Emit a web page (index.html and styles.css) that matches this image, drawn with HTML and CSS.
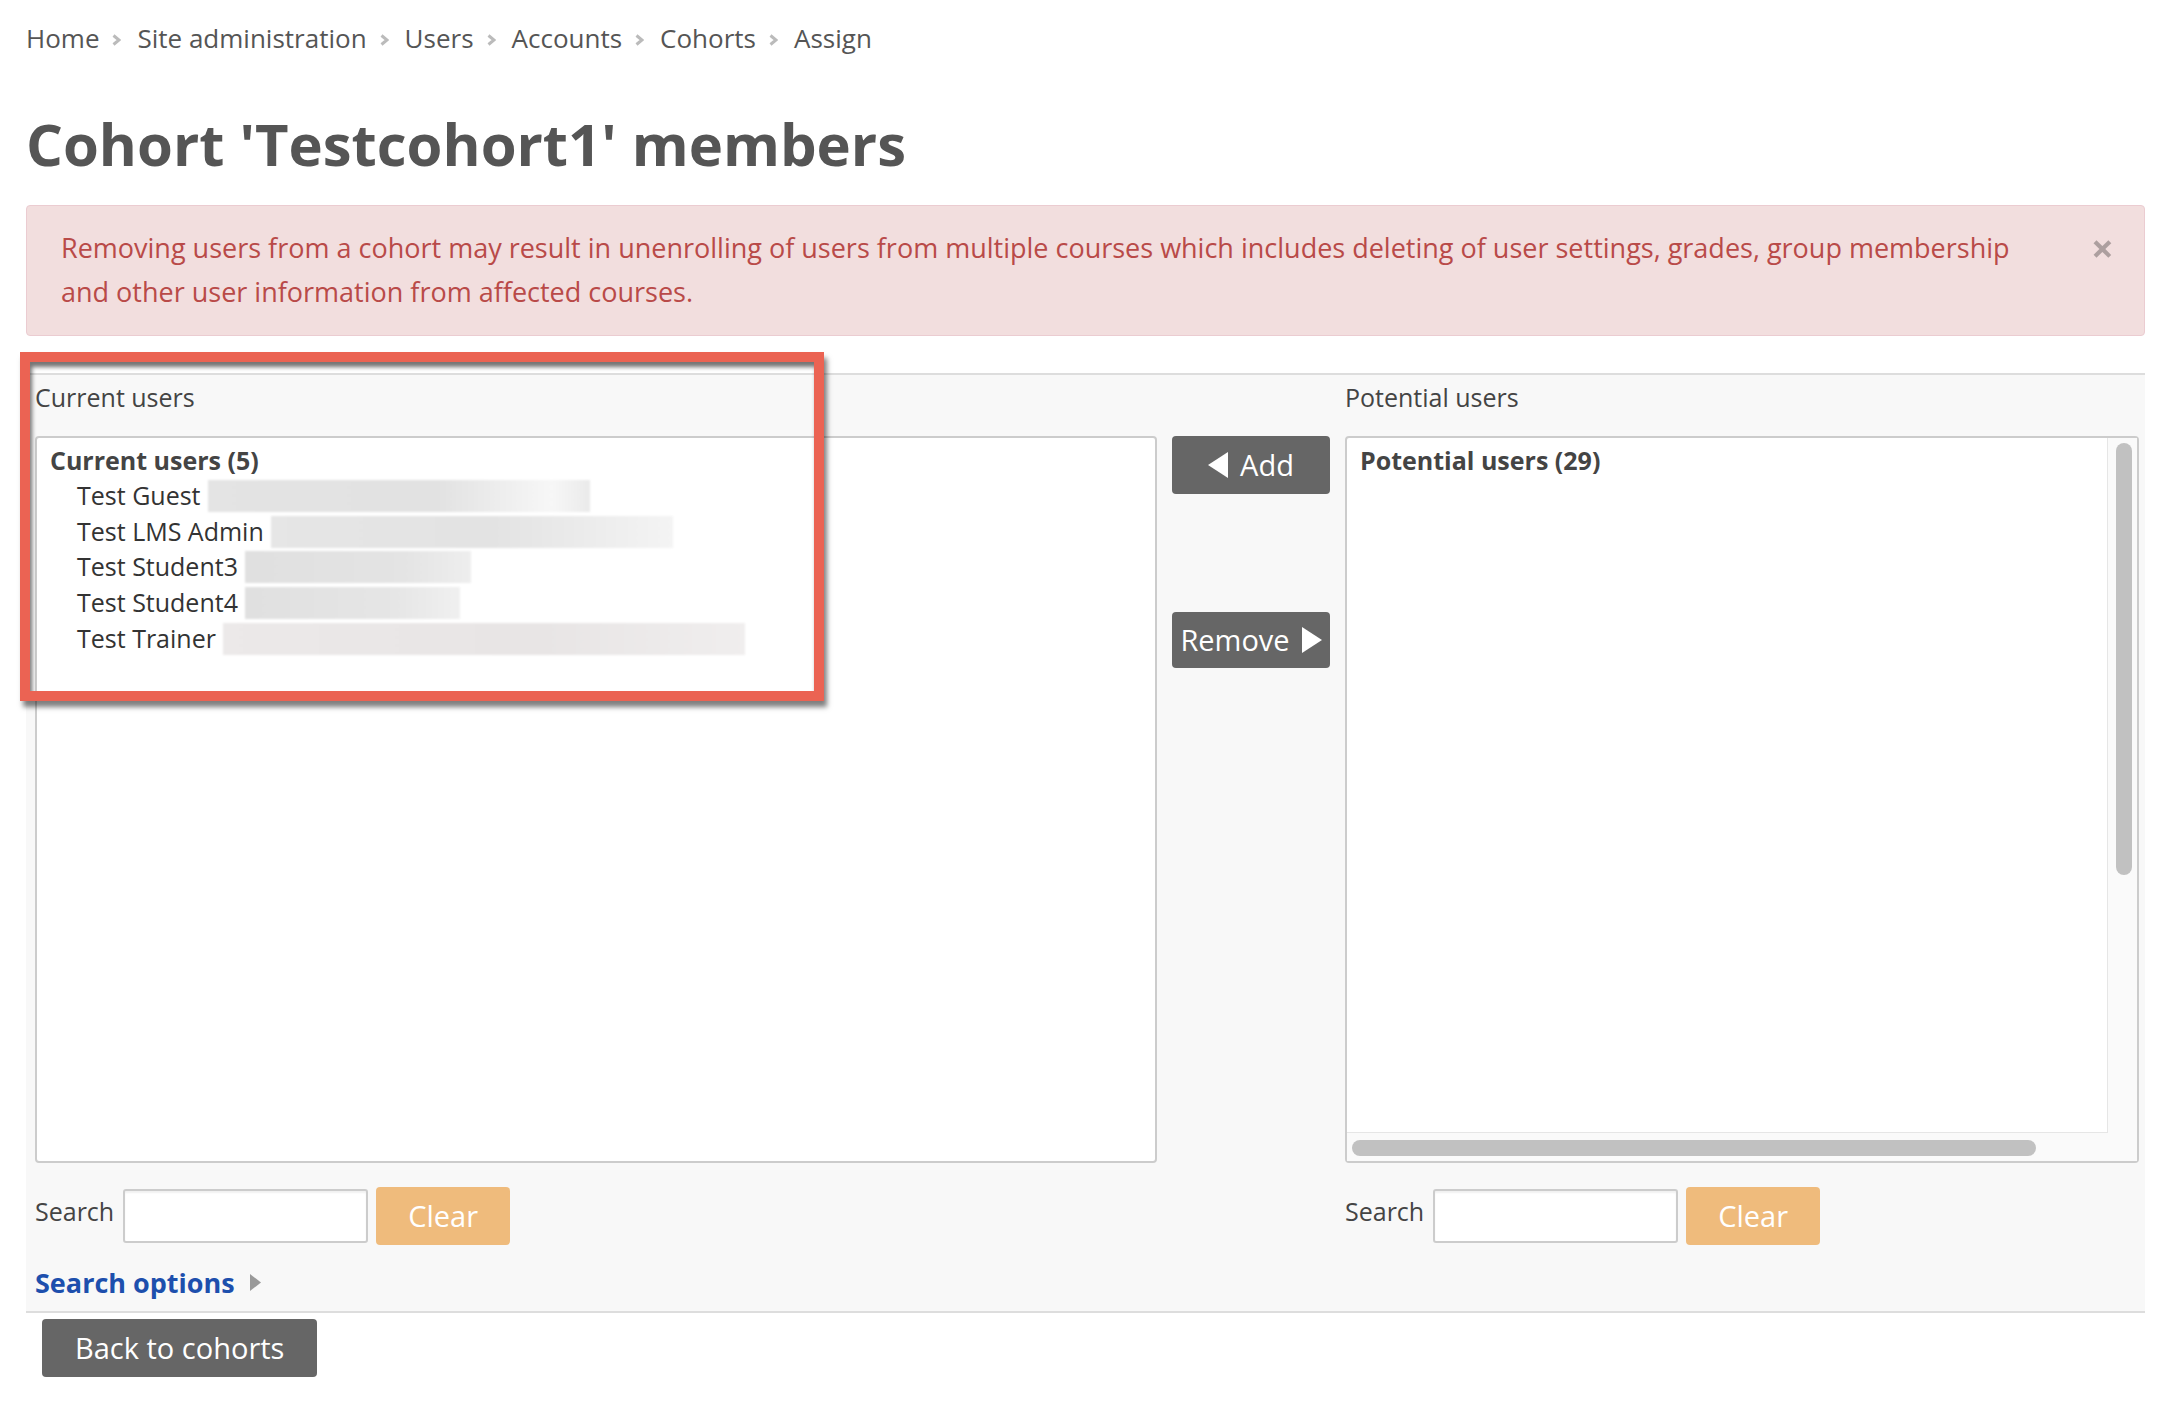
FILE: index.html
```html
<!DOCTYPE html>
<html lang="en">
<head>
    <meta charset="UTF-8">
    <meta name="viewport" content="width=device-width, initial-scale=1.0">
    <title>Cohort 'Testcohort1' members</title>
    <link rel="stylesheet" href="styles.css">
</head>
<body>
<div id="page">
    <nav class="breadcrumb">
        <a href="#">Home</a>
        <svg class="sep" width="9" height="12" viewBox="0 0 9 12"><polyline points="1.5,1.5 7,6 1.5,10.5"/></svg>
        <a href="#">Site administration</a>
        <svg class="sep" width="9" height="12" viewBox="0 0 9 12"><polyline points="1.5,1.5 7,6 1.5,10.5"/></svg>
        <a href="#">Users</a>
        <svg class="sep" width="9" height="12" viewBox="0 0 9 12"><polyline points="1.5,1.5 7,6 1.5,10.5"/></svg>
        <a href="#">Accounts</a>
        <svg class="sep" width="9" height="12" viewBox="0 0 9 12"><polyline points="1.5,1.5 7,6 1.5,10.5"/></svg>
        <a href="#">Cohorts</a>
        <svg class="sep" width="9" height="12" viewBox="0 0 9 12"><polyline points="1.5,1.5 7,6 1.5,10.5"/></svg>
        <span>Assign</span>
    </nav>

    <h2 class="page-title">Cohort 'Testcohort1' members</h2>

    <div class="alert">
        <p>Removing users from a cohort may result in unenrolling of users from multiple courses which includes deleting of user settings, grades, group membership and other user information from affected courses.</p>
        <button class="close" type="button">&times;</button>
    </div>

    <form class="assign-form">
        <div class="selector">
            <label class="col-label">Current users</label>
            <div></div>
            <label class="col-label">Potential users</label>

            <div class="listbox">
                <div class="group">Current users (5)</div>
                <div class="option">Test Guest <span class="redact r-guest"></span></div>
                <div class="option">Test LMS Admin <span class="redact r-admin"></span></div>
                <div class="option">Test Student3 <span class="redact r-s3"></span></div>
                <div class="option">Test Student4 <span class="redact r-s4"></span></div>
                <div class="option">Test Trainer <span class="redact r-trainer"></span></div>
            </div>

            <div class="buttons">
                <button class="btn move" type="button">
                    <svg width="20" height="26" viewBox="0 0 20 26"><polygon points="20,0 20,26 0,13"/></svg>
                    Add
                </button>
                <button class="btn move remove" type="button">
                    Remove
                    <svg width="20" height="26" viewBox="0 0 20 26"><polygon points="0,0 0,26 20,13"/></svg>
                </button>
            </div>

            <div class="listbox scrolling">
                <div class="scroll-view">
                    <div class="group">Potential users (29)</div>
                </div>
                <div class="vtrack"><div class="vthumb"></div></div>
                <div class="htrack"><div class="hthumb"></div></div>
                <div class="corner"></div>
            </div>

            <div class="search">
                <label>Search</label>
                <input type="text">
                <button class="btn clear" type="button">Clear</button>
            </div>
            <div></div>
            <div class="search">
                <label>Search</label>
                <input type="text">
                <button class="btn clear" type="button">Clear</button>
            </div>

            <div class="search-options">
                <a href="#">Search options</a>
                <svg width="11" height="17" viewBox="0 0 11 17"><polygon points="0,0 11,8.5 0,17"/></svg>
            </div>
        </div>
    </form>

    <button class="btn back" type="button">Back to cohorts</button>

    <div class="highlight"></div>
</div>
</body>
</html>
```

FILE: styles.css
```css
* {
    box-sizing: border-box;
}
body {
    margin: 0;
    font-family: "Open Sans", "Liberation Sans", sans-serif;
    font-size: 26px;
    color: #444;
    background-color: white;
}
#page {
    position: relative;
    padding: 0 21px 30px 26px;
}
a {
    color: inherit;
    text-decoration: none;
}

/* breadcrumb */
.breadcrumb {
    display: flex;
    align-items: center;
    padding-top: 19px;
    line-height: 39px;
    color: #555;
}
.breadcrumb .sep {
    margin: 2px 16px 0 13px;
    fill: none;
    stroke: #bbb;
    stroke-width: 3;
}

.page-title {
    margin: 51px 0 26px;
    font-size: 58px;
    font-weight: 700;
    line-height: 1.2;
    color: #555;
}

/* alert */
.alert {
    display: flex;
    align-items: flex-start;
    padding: 20px 28px 21px 34px;
    background-color: #f2dede;
    border: 1px solid #ebccd1;
    border-radius: 4px;
    color: #b94a48;
    font-size: 27px;
    line-height: 44px;
}
.alert p {
    flex: 1;
    margin: 0;
}
.alert .close {
    margin-left: 49px;
    padding: 0;
    width: 27px;
    border: none;
    background: none;
    font-family: inherit;
    font-size: 40px;
    font-weight: 700;
    line-height: 44px;
    color: #000;
    opacity: 0.28;
    cursor: pointer;
}

/* user selector */
.assign-form {
    margin-top: 37px;
    padding: 4px 6px 10px 9px;
    background-color: #f8f8f8;
    border-top: 2px solid #ddd;
    border-bottom: 2px solid #ddd;
}
.selector {
    display: grid;
    grid-template-columns: 1122px 158px 1fr;
    column-gap: 15px;
}
.col-label {
    margin-bottom: 21px;
    font-size: 25px;
    line-height: 36px;
}
.listbox {
    height: 727px;
    padding: 5px 0 0 13px;
    background-color: white;
    border: 2px solid #ccc;
    border-radius: 4px;
    color: #333;
    font-size: 25px;
    line-height: 35.6px;
}
.group {
    font-weight: 700;
    color: #444;
}
.option {
    padding-left: 27px;
}
.redact {
    display: inline-block;
    height: 32px;
    margin-left: 1px;
    vertical-align: -7px;
    background: linear-gradient(90deg, #e6e6e6, #e3e3e3 55%, #f4f4f4);
    filter: blur(1px);
}
.r-guest { width: 382px; background: linear-gradient(90deg, #e4e4e4, #e2e2e2 60%, #f7f7f7 90%, #eaeaea); }
.r-admin { width: 402px; }
.r-s3 { width: 226px; background: linear-gradient(90deg, #e0e0e0, #e4e4e4 70%, #eeeeee); }
.r-s4 { width: 215px; background: linear-gradient(90deg, #e0e0e0, #e6e6e6 70%, #f0f0f0); }
.r-trainer { width: 522px; background: linear-gradient(90deg, #ece9e9, #e8e5e5 60%, #f0eeee); }

.listbox.scrolling {
    display: grid;
    grid-template-columns: 1fr 29px;
    grid-template-rows: 1fr 28px;
    padding: 0;
}
.scroll-view {
    padding: 5px 13px;
    border-right: 1px solid #e6e6e6;
    border-bottom: 1px solid #e6e6e6;
}
.vtrack,
.htrack,
.corner {
    background-color: #fafafa;
}
.vthumb {
    width: 16px;
    height: 432px;
    margin: 5px 0 0 8px;
    background-color: #c1c1c1;
    border-radius: 8px;
}
.hthumb {
    width: 684px;
    height: 16px;
    margin: 7px 0 0 5px;
    background-color: #c1c1c1;
    border-radius: 8px;
}

/* buttons */
.btn {
    display: inline-flex;
    align-items: center;
    justify-content: center;
    height: 58px;
    padding: 0 33px;
    border: none;
    border-radius: 4px;
    background-color: #666;
    color: white;
    font-family: inherit;
    font-size: 29px;
    cursor: pointer;
}
.btn svg {
    fill: white;
}
.buttons {
    display: flex;
    flex-direction: column;
}
.move {
    width: 100%;
    padding: 0;
    gap: 12px;
}
.move.remove {
    height: 56px;
    margin-top: 118px;
}

.search {
    display: flex;
    align-items: center;
    margin-top: 24px;
    font-size: 25px;
}
.search label {
    margin: 0 9px 10px 0;
}
.search input {
    width: 245px;
    height: 54px;
    margin-right: 8px;
    border: 2px solid #ccc;
    border-radius: 3px;
    box-shadow: inset 0 2px 2px rgba(0, 0, 0, 0.06);
    font-family: inherit;
    font-size: 25px;
}
.btn.clear {
    width: 134px;
    padding: 0;
    background-color: #efbb7c;
}

.search-options {
    grid-column: 1 / -1;
    display: flex;
    align-items: center;
    gap: 15px;
    margin-top: 19px;
    font-size: 27px;
}
.search-options a {
    font-weight: 700;
    color: #1d4fad;
}
.search-options svg {
    fill: #999;
}

.back {
    margin: 6px 0 0 16px;
}

/* screenshot annotation */
.highlight {
    position: absolute;
    left: 20px;
    top: 352px;
    width: 804px;
    height: 349px;
    border: 10px solid #eb6353;
    box-shadow: 3px 6px 5px rgba(0, 0, 0, 0.5), inset 2px 5px 4px rgba(0, 0, 0, 0.55);
}
```
